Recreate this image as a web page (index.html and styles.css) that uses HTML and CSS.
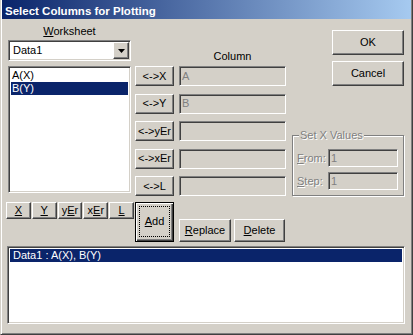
FILE: index.html
```html
<!DOCTYPE html>
<html lang="en">
<head>
  <meta charset="UTF-8" />
  <title>Select Columns for Plotting</title>
  <link rel="stylesheet" href="styles.css">
</head>
<body>
  <div class="window">
    <!-- Title bar -->
    <div class="titlebar">Select Columns for Plotting</div>

    <div class="top">
      <!-- Worksheet column -->
      <div class="col-left">
        <div class="label-center"><u>W</u>orksheet</div>
        <div class="combo sunken">
          <span class="combo-text">Data1</span>
          <span class="combo-btn raised">
            <svg width="7" height="4" viewBox="0 0 7 4"><path d="M0 0h7L3.5 4z" fill="#000"/></svg>
          </span>
        </div>
        <div class="list sunken">
          <div class="item">A(X)</div>
          <div class="item selected">B(Y)</div>
        </div>
        <div class="axis-buttons">
          <button class="btn raised"><u>X</u></button>
          <button class="btn raised"><u>Y</u></button>
          <button class="btn raised">y<u>E</u>r</button>
          <button class="btn raised">x<u>E</u>r</button>
          <button class="btn raised"><u>L</u></button>
        </div>
      </div>

      <!-- Column assignments -->
      <div class="col-mid">
        <div class="col-title">Column</div>
        <div class="assign-rows">
          <button class="btn raised">&lt;-&gt;X</button>
          <div class="field sunken">A</div>
          <button class="btn raised">&lt;-&gt;Y</button>
          <div class="field sunken">B</div>
          <button class="btn raised">&lt;-&gt;yEr</button>
          <div class="field sunken"></div>
          <button class="btn raised">&lt;-&gt;xEr</button>
          <div class="field sunken"></div>
          <button class="btn raised">&lt;-&gt;L</button>
          <div class="field sunken"></div>
        </div>
        <div class="actions">
          <button class="btn btn-default"><span class="focus"><u>A</u>dd</span></button>
          <button class="btn raised btn-replace"><u>R</u>eplace</button>
          <button class="btn raised btn-delete"><u>D</u>elete</button>
        </div>
      </div>

      <!-- OK / Cancel and X values -->
      <div class="col-right">
        <button class="btn raised btn-ok">OK</button>
        <button class="btn raised btn-cancel">Cancel</button>
        <div class="group">
          <div class="group-title disabled">Set X Values</div>
          <div class="xrow">
            <span class="xlabel disabled"><u>F</u>rom:</span>
            <div class="field sunken xfield">1</div>
          </div>
          <div class="xrow xrow-step">
            <span class="xlabel disabled"><u>S</u>tep:</span>
            <div class="field sunken xfield">1</div>
          </div>
        </div>
      </div>
    </div>

    <!-- Plot list -->
    <div class="results sunken">
      <div class="item selected result-item">Data1 : A(X), B(Y)</div>
    </div>
  </div>
</body>
</html>
```

FILE: styles.css
```css
* {
  margin: 0; padding: 0; box-sizing: border-box;
}

body {
  background: #d4d0c8;
  font-family: "Liberation Sans", Arial, sans-serif;
  font-size: 11px;
  line-height: 13px;
  color: #000;
}

.window {
  width: 413px;
  height: 335px;
  padding: 0 1px 1px 1px;
  border: 1px solid;
  border-top: 0;
  border-color: #d4d0c8 #404040 #404040 #d4d0c8;
  box-shadow: inset 1px 0 #fff, inset -1px -1px #808080;
}

.titlebar {
  height: 19px;
  padding: 4px 0 0 3px;
  line-height: 15px;
  font-size: 11.5px;
  font-weight: bold;
  color: #fff;
  background: linear-gradient(to right, #0a246a, #a6caf0);
}

/* bevels */
.raised {
  border: 1px solid;
  border-color: #fff #404040 #404040 #fff;
  box-shadow: inset -1px -1px #808080;
}

.sunken {
  border: 1px solid;
  border-color: #808080 #fff #fff #808080;
  box-shadow: inset 1px 1px #404040, inset -1px -1px #d4d0c8;
}

.btn {
  font: inherit;
  color: #000;
  background: #d4d0c8;
  display: flex;
  align-items: center;
  justify-content: center;
  white-space: nowrap;
}

.disabled {
  color: #808080;
  text-shadow: 1px 1px 0 #fff;
}

.top {
  display: flex;
  align-items: flex-start;
  padding-left: 6px;
}

/* left column */
.col-left {
  width: 123px;
  padding-top: 6px;
}

.label-center {
  text-align: center;
}

.combo {
  margin-top: 2px;
  height: 21px;
  display: flex;
  padding: 1px;
  background: #fff;
  align-items: center;
}

.combo-text {
  flex: 1;
  padding-left: 3px;
}

.combo-btn {
  width: 16px;
  height: 17px;
  display: flex;
  align-items: center;
  justify-content: center;
  background: #d4d0c8;
}

.list {
  margin-top: 5px;
  height: 127px;
  background: #fff;
  padding: 2px;
}

.item {
  height: 13px;
  padding-left: 1px;
}

.selected {
  background: #0a246a;
  color: #fff;
}

.axis-buttons {
  display: flex;
  gap: 1px;
  width: 128px;
  margin: 9px 0 0 -2px;
}

.axis-buttons .btn {
  flex: 1;
  height: 17px;
}

/* middle column */
.col-mid {
  width: 151px;
  margin-left: 4px;
  padding-top: 31px;
}

.col-title {
  padding-left: 44px;
  text-align: center;
}

.assign-rows {
  margin-top: 3px;
  display: grid;
  grid-template-columns: 39px 107px;
  grid-auto-rows: 20px;
  column-gap: 5px;
  row-gap: 7.5px;
}

.field {
  background: #d4d0c8;
  color: #808080;
  padding-left: 2px;
  display: flex;
  align-items: center;
}

.actions {
  margin-top: 6px;
  display: flex;
  align-items: flex-end;
}

.btn-default {
  width: 39px;
  height: 40px;
  border: 1px solid #000;
  box-shadow: inset 1px 1px #fff, inset -1px -1px #404040, inset -2px -2px #808080;
  padding: 3px 3px 4px 3px;
}

.focus {
  flex: 1;
  align-self: stretch;
  border: 1px dotted #000;
  display: flex;
  align-items: center;
  justify-content: center;
}

.btn-replace {
  width: 52px;
  height: 23px;
  margin-left: 5px;
}

.btn-delete {
  width: 51px;
  height: 23px;
  margin-left: 3px;
}

/* right column */
.col-right {
  width: 112px;
  margin-left: 6px;
  padding-top: 11px;
}

.btn-ok,
.btn-cancel {
  width: 72px;
  height: 25px;
  margin-left: auto;
}

.btn-cancel {
  margin-top: 6px;
}

.group {
  margin-top: 49px;
  height: 61px;
  border: 1px solid #808080;
  box-shadow: inset 1px 1px #fff, 1px 1px #fff;
}

.group-title {
  width: fit-content;
  margin: -7px 0 0 6px;
  padding: 0 1px;
  background: #d4d0c8;
}

.xrow {
  display: flex;
  align-items: center;
  margin-top: 7px;
  padding-left: 4px;
}

.xrow-step {
  margin-top: 5px;
}

.xlabel {
  width: 31px;
}

.xfield {
  width: 70px;
  height: 18px;
}

/* bottom list */
.results {
  margin: 4px 0 0 5px;
  width: 398px;
  height: 78px;
  background: #fff;
  padding: 2px;
}

.result-item {
  padding-left: 3px;
}
```
